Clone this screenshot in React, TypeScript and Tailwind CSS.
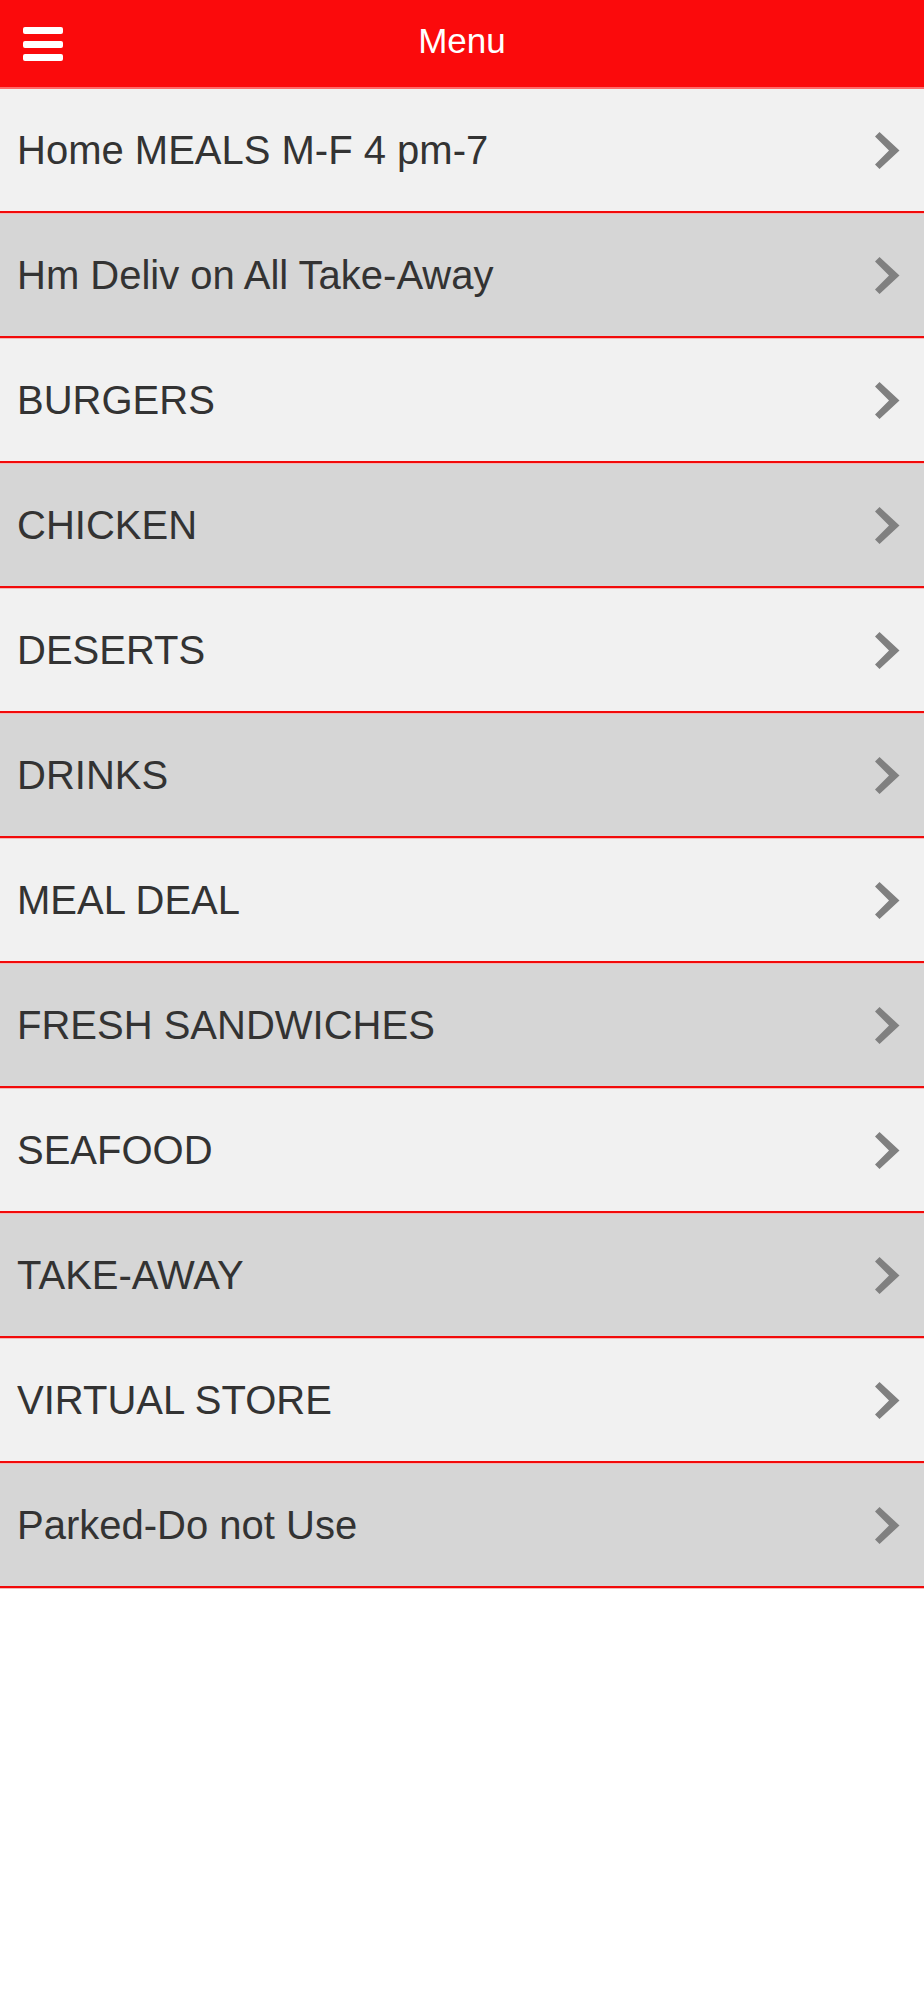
const CATEGORIES = [
  'Home MEALS M-F 4 pm-7',
  'Hm Deliv on All Take-Away',
  'BURGERS',
  'CHICKEN',
  'DESERTS',
  'DRINKS',
  'MEAL DEAL',
  'FRESH SANDWICHES',
  'SEAFOOD',
  'TAKE-AWAY',
  'VIRTUAL STORE',
  'Parked-Do not Use',
];

function Chevron() {
  return (
    <svg width="25" height="37" viewBox="0 0 25 37" className="shrink-0">
      <polygon
        points="4.5,0 24.5,18.5 4.5,37 0,32.5 14,18.5 0,4.5"
        fill="#808080"
      />
    </svg>
  );
}

function Hamburger() {
  return (
    <div className="flex w-[40px] flex-col gap-[6.5px]">
      <span className="h-[7px] rounded-[2px] bg-white" />
      <span className="h-[7px] rounded-[2px] bg-white" />
      <span className="h-[7px] rounded-[2px] bg-white" />
    </div>
  );
}

function MenuRow({ label, idx }: { label: string; idx: number }) {
  return (
    <div className="border-b border-[#f2b8b8]">
      <div
        className={`flex h-[124px] items-center justify-between border-b-2 border-[#f20a0a] pl-[17px] pr-[24px] ${
          idx % 2 === 0 ? 'bg-[#f1f1f1]' : 'bg-[#d6d6d6]'
        }`}
      >
        <span className="text-[40px] leading-none text-[#333333]">{label}</span>
        <Chevron />
      </div>
    </div>
  );
}

export default function App() {
  return (
    <div
      className="min-h-[2000px] w-full bg-white"
      style={{ fontFamily: '"Liberation Sans", Arial, sans-serif' }}
    >
      <header className="relative flex h-[89px] items-center justify-center border-b-2 border-[#ff6a6a] bg-[#fb0a0c]">
        <div className="absolute left-[23px] top-[27px]">
          <Hamburger />
        </div>
        <h1 className="pb-[6px] text-[35px] font-normal leading-none text-white">
          Menu
        </h1>
      </header>
      <div>
        {CATEGORIES.map((label, idx) => (
          <MenuRow key={`menu-row-${idx}`} label={label} idx={idx} />
        ))}
      </div>
    </div>
  );
}
